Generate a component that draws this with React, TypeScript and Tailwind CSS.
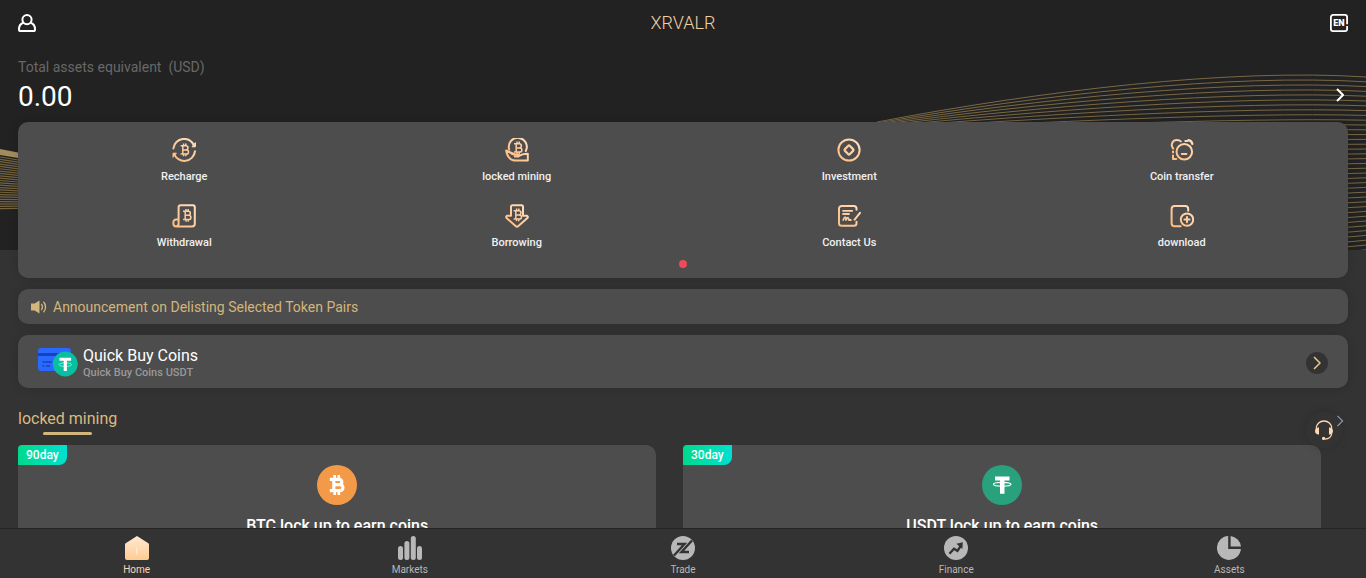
import type { ReactNode } from "react";

type IconItem = {
  label: string;
  icon: ReactNode;
};

type Plan = {
  days: string;
  title: string;
  icon: ReactNode;
};

const waveLines = Array.from({ length: 37 }, (_, i) => i);
const leftLines = Array.from({ length: 23 }, (_, i) => i);

function HeroBackground() {
  return (
    <div className="absolute inset-x-0 top-0 h-[250px] bg-[#222]" aria-hidden="true">
      <svg viewBox="0 0 1366 250" preserveAspectRatio="none" className="h-full w-full" fill="none">
        {waveLines.map((i) => (
          <path
            key={i}
            d={`M877 ${122 + i}C1040 ${91 + 4 * i} 1230 ${68 + 5.5 * i} 1366 ${77 + 4.8 * i}`}
            stroke="#7a6844"
            strokeWidth="1"
          />
        ))}
        <path d="M0 149L18 152.5V158L0 155Z" fill="#a38c5c" />
        {leftLines.map((i) => (
          <path
            key={i}
            d={`M0 ${157 + i * 2.35}L18 ${160 + i * 2.2}`}
            stroke="#75643f"
            strokeWidth="1.2"
          />
        ))}
      </svg>
    </div>
  );
}

function GoldIcon({ children }: { children: ReactNode }) {
  return (
    <svg
      viewBox="0 0 24 24"
      className="h-6 w-6"
      fill="none"
      stroke="url(#gold)"
      strokeWidth="2"
      strokeLinecap="round"
      strokeLinejoin="round"
      aria-hidden="true"
    >
      {children}
    </svg>
  );
}

function CoinMark({ x = 0, y = 0 }: { x?: number; y?: number }) {
  return (
    <path
      transform={`translate(${x} ${y})`}
      strokeWidth="1.5"
      strokeLinecap="butt"
      d="M8 7.8h5.3a2 2 0 0 1 0 4.1h-3 3.5a2.1 2.1 0 0 1 0 4.2H8M10.2 7.8v8.3M11 5.6v2M13.2 5.6v2M11 16.1v2.2M13.2 16.1v2.2"
    />
  );
}

const actions: IconItem[] = [
  {
    label: "Recharge",
    icon: (
      <GoldIcon>
        <path d="M1.4 10.4A10.8 10.8 0 0 1 22.200 7.800M23 13.200A10.800 10.800 0 0 1 2.200 16" />
        <path d="M23.400 5v3.800h-3zM1 19v-3.800h3z" fill="url(#gold)" strokeWidth="1" />
        <CoinMark x={0.6} />
      </GoldIcon>
    ),
  },
  {
    label: "locked mining",
    icon: (
      <GoldIcon>
        <path d="M4.200 11.500a9 9 0 1 1 16.600 1.500" />
        <CoinMark y={-2} x={1} />
        <path d="M1.200 12.500c2.200-.2 4.200 3.200 7.400 3.900l4.600.4c1.200.2 1.200 1.600.2 1.600h-3.600M13.600 18l4-1.600c1.600-.6 3.400-.6 5.200-.6v6.700H11.200C6.200 22.500 2.200 19 1.200 12.500z" />
      </GoldIcon>
    ),
  },
  {
    label: "Investment",
    icon: (
      <GoldIcon>
        <circle cx="12" cy="12" r="10.6" />
        <rect x="8.5" y="8.5" width="7" height="7" rx="1.3" transform="rotate(45 12 12)" strokeWidth="2.3" />
      </GoldIcon>
    ),
  },
  {
    label: "Coin transfer",
    icon: (
      <GoldIcon>
        <circle cx="14.3" cy="13.8" r="7.8" />
        <path d="M11.8 16h4.600M3.200 10.600C.3 7.200 2.200 2 6.800 2c1.600 0 3 .4 4 1.400M3 13.600v.8M3 17.400v3.600h3.200" />
        <path d="M15.400 3h2M18.400 2.200c2.200.4 3.600 1.600 4 3.800" strokeWidth="2.2" />
      </GoldIcon>
    ),
  },
  {
    label: "Withdrawal",
    icon: (
      <GoldIcon>
        <path d="M6.600 18.800V3.300a2 2 0 0 1 2-2h12.200a2 2 0 0 1 2 2v16.500a2.800 2.800 0 0 1-2.800 2.800H4.200a2.800 2.800 0 0 1-2.800-2.800v-1.600a2.800 2.800 0 0 1 2.800-2.800h2.400v4.200a2.800 2.800 0 0 1-2.800 2.800" />
        <CoinMark x={3} y={-0.6} />
      </GoldIcon>
    ),
  },
  {
    label: "Borrowing",
    icon: (
      <GoldIcon>
        <path d="M7.500 1.300h9a1.500 1.500 0 0 1 1.500 1.500v9h3.400c1.400 0 1.900 1.400 1 2.200l-9 8.100a2.100 2.100 0 0 1-2.800 0L1.600 14c-.9-.8-.4-2.200 1-2.200H6v-9a1.500 1.500 0 0 1 1.500-1.500z" />
        <CoinMark x={0.6} y={-1} />
      </GoldIcon>
    ),
  },
  {
    label: "Contact Us",
    icon: (
      <GoldIcon>
        <path d="M19.500 5.800V4.600a2.600 2.600 0 0 0-2.600-2.600H4.600A2.600 2.600 0 0 0 2 4.600v14.600a2.600 2.600 0 0 0 2.600 2.600h12.300a2.600 2.600 0 0 0 2.600-2.600v-1.400M23 8.800l-5.400 6.800" />
        <path d="M6 6.800h9.200M6 10h6M6.200 16c1.800-4 2.600-3.400 2.800 0 1.600-3.600 2.400-2.800 3 0h1.800" strokeWidth="1.8" />
      </GoldIcon>
    ),
  },
  {
    label: "download",
    icon: (
      <GoldIcon>
        <path d="M18.200 6.800V5a3 3 0 0 0-3-3H4.600a3 3 0 0 0-3 3v14.200a3 3 0 0 0 3 3h6" />
        <circle cx="17" cy="15.6" r="6.2" />
        <path d="M17 13v5.200M14.400 15.600h5.200" />
      </GoldIcon>
    ),
  },
];

const navItems: IconItem[] = [
  {
    label: "Home",
    icon: (
      <svg viewBox="0 0 24 24" className="h-6 w-6" aria-hidden="true">
        <path d="M12 0l11.300 7.200q.7.500.7 1.300V22a2 2 0 0 1-2 2H2a2 2 0 0 1-2-2V8.500q0-.8.7-1.300z" fill="url(#home)" />
        <path d="M11.600 11.500v7" stroke="#ffebd3" strokeWidth="1.5" />
      </svg>
    ),
  },
  {
    label: "Markets",
    icon: (
      <svg viewBox="0 0 24 24" className="h-6 w-6" fill="currentColor" aria-hidden="true">
        <rect x="0" y="10" width="5" height="14" rx="2.5" />
        <rect x="6.4" y="5" width="5" height="19" rx="2.5" />
        <rect x="12.8" y="0" width="5" height="24" rx="2.5" />
        <rect x="19" y="10" width="5" height="14" rx="2.5" />
      </svg>
    ),
  },
  {
    label: "Trade",
    icon: (
      <svg viewBox="0 0 24 24" className="h-6 w-6" aria-hidden="true">
        <circle cx="12" cy="12" r="12" fill="currentColor" />
        <path d="M6 8h7.500L3 19.500M18 16h-7.500L21 4.500" fill="none" stroke="#333" strokeWidth="2.4" />
      </svg>
    ),
  },
  {
    label: "Finance",
    icon: (
      <svg viewBox="0 0 24 24" className="h-6 w-6" aria-hidden="true">
        <circle cx="12" cy="12" r="12" fill="currentColor" />
        <path d="M5.400 17.800l4.600-5 3.400 2 3.400-5" fill="none" stroke="#333" strokeWidth="2.4" />
        <path d="M12.400 7.800l6.400-1.600-.4 6.800z" fill="#333" />
      </svg>
    ),
  },
  {
    label: "Assets",
    icon: (
      <svg viewBox="0 0 24 24" className="h-6 w-6" fill="currentColor" aria-hidden="true">
        <path d="M11.200 0A12 12 0 1 0 23.900 13H11.200z" />
        <path d="M13.600 0v10.600H24A12 12 0 0 0 13.600 0z" />
      </svg>
    ),
  },
];

const plans: Plan[] = [
  {
    days: "90day",
    title: "BTC lock up to earn coins",
    icon: (
      <svg viewBox="0 0 40 40" className="h-10 w-10" aria-hidden="true">
        <circle cx="20" cy="20" r="20" fill="#f39a48" />
        <path
          d="M12.800 14.300h9.400a2.600 2.600 0 0 1 0 5.300h-4.500 5.200a3 3 0 0 1 0 6.100H12.800M16.800 14.300v11.400"
          fill="none"
          stroke="#fff"
          strokeWidth="3.2"
        />
        <path d="M17.700 10v4M21.800 10v4M17.700 26v4M21.800 26v4" stroke="#fff" strokeWidth="2.6" />
      </svg>
    ),
  },
  {
    days: "30day",
    title: "USDT lock up to earn coins",
    icon: (
      <svg viewBox="0 0 40 40" className="h-10 w-10" aria-hidden="true">
        <circle cx="20" cy="20" r="20" fill="#28a17c" />
        <path d="M13 11.500h14.500v4H22.500v13.200h-4.500V15.500h-5z" fill="#fff" />
        <ellipse cx="20.200" cy="19.300" rx="8.800" ry="1.900" fill="none" stroke="#fff" strokeWidth="1.2" />
      </svg>
    ),
  },
];

function Chevron({ className }: { className: string }) {
  return (
    <svg viewBox="0 0 8 14" className={className} fill="none" stroke="currentColor" aria-hidden="true">
      <path d="M1 1l6 6-6 6" />
    </svg>
  );
}

function GradientDefs() {
  return (
    <svg className="absolute h-0 w-0" aria-hidden="true">
      <defs>
        <linearGradient id="gold" gradientUnits="userSpaceOnUse" x1="0" y1="24" x2="24" y2="0">
          <stop offset="0" stopColor="#fdb878" />
          <stop offset="1" stopColor="#ffe2c8" />
        </linearGradient>
        <linearGradient id="home" x1="0" y1="0" x2="0" y2="1">
          <stop offset="0" stopColor="#ffe9d2" />
          <stop offset="1" stopColor="#ffcb92" />
        </linearGradient>
      </defs>
    </svg>
  );
}

export default function App() {
  return (
    <div className="relative min-h-screen overflow-hidden bg-[#333] font-[Roboto,sans-serif] text-white">
      <GradientDefs />
      <HeroBackground />

      <div className="relative px-[18px]">
        <header className="flex h-[46px] items-center justify-between">
          <button type="button" aria-label="Account">
            <svg viewBox="0 0 18 18" className="h-[18px] w-[18px]" fill="none" stroke="#fff" strokeWidth="2" aria-hidden="true">
              <circle cx="9" cy="5.6" r="4.6" />
              <path d="M5.600 8.800C2.600 9.600 1 12 1 15.400c0 1 .6 1.600 1.600 1.600h12.800c1 0 1.600-.6 1.600-1.600 0-3.400-1.600-5.800-4.600-6.600" />
            </svg>
          </button>
          <h1 className="text-lg font-light text-[#f3cfa3]">XRVALR</h1>
          <button type="button" aria-label="Language">
            <svg viewBox="0 0 18 18" className="h-[18px] w-[18px]" aria-hidden="true">
              <path
                d="M17.100 10.200V3a2.100 2.100 0 0 0-2.100-2.100H3A2.100 2.100 0 0 0 .9 3v12A2.100 2.100 0 0 0 3 17.100h12a2.100 2.100 0 0 0 2.100-2.100v-3"
                fill="none"
                stroke="#fff"
                strokeWidth="1.8"
              />
              <text x="9" y="12" textAnchor="middle" className="fill-white text-[9px] font-black">
                EN
              </text>
            </svg>
          </button>
        </header>

        <section className="flex items-center justify-between pt-[11px]">
          <div>
            <p className="text-sm leading-5 whitespace-pre text-[#686868]">
              {"Total assets equivalent  (USD)"}
            </p>
            <p className="text-[28px] leading-10">0.00</p>
          </div>
          <a href="#assets" aria-label="View assets" className="mt-4 mr-1">
            <Chevron className="h-[14px] w-2 stroke-2" />
          </a>
        </section>

        <section className="mt-[5px] rounded-[10px] bg-[#4d4d4d] pt-4 pb-[10px] shadow-[0_0_10px_rgba(0,0,0,0.15)]">
          <div className="grid grid-cols-4 gap-y-[19px]">
            {actions.map((action) => (
              <a key={action.label} href="#action" className="flex flex-col items-center gap-[7px]">
                {action.icon}
                <span className="text-[11px] leading-4 font-medium text-[#f0f0f0]">{action.label}</span>
              </a>
            ))}
          </div>
          <div className="mt-[9px] flex justify-center">
            <span className="h-2 w-2 rounded-full bg-[#ee4a5a]" />
          </div>
        </section>

        <a
          href="#announcement"
          className="mt-[11px] flex h-[35px] items-center gap-[6px] rounded-[10px] bg-[#4d4d4d] px-3 text-[#d3b67b] shadow-[0_0_10px_rgba(0,0,0,0.15)]"
        >
          <svg viewBox="0 0 17 14" className="h-[14px] w-[17px]" aria-hidden="true">
            <path d="M1 3.400h3.600L9.500.4v13.200L4.600 10.600H1z" fill="currentColor" />
            <path d="M11.200 4c1.500 1.700 1.500 4.300 0 6M13.400 1.800c2.900 3 2.900 7.400 0 10.400" fill="none" stroke="currentColor" strokeWidth="1.3" />
          </svg>
          <span className="text-sm leading-5">Announcement on Delisting Selected Token Pairs</span>
        </a>

        <a
          href="#quick-buy"
          className="mt-[11px] flex items-center rounded-[10px] bg-[#4d4d4d] pt-[11px] pr-5 pb-2 pl-5 shadow-[0_0_10px_rgba(0,0,0,0.15)]"
        >
          <svg viewBox="0 0 40 30" className="h-[30px] w-10" aria-hidden="true">
            <rect x="0" y="0" width="33" height="23" rx="3" fill="#2969ff" />
            <path d="M0 5h33v3H0z" fill="#1644b4" />
            <path d="M4.500 14H14M4.500 18h2M8 18h4" stroke="#1644b4" strokeWidth="1.3" />
            <circle cx="27.300" cy="16" r="12.4" fill="#08bfa0" />
            <path d="M21 16.600c0 2.400 12.600 2.400 12.600 0s-12.600-2.400-12.600 0z" fill="none" stroke="#8fe6d8" strokeWidth="1" />
            <path d="M21.500 9.800h11.600v3h-4.200V23h-3.200V12.800h-4.200z" fill="#fff" />
          </svg>
          <div className="ml-[5px] flex-1">
            <p className="text-base leading-5">Quick Buy Coins</p>
            <p className="text-[11px] leading-[14px] font-medium text-[#999]">Quick Buy Coins USDT</p>
          </div>
          <span className="flex h-[22px] w-[22px] items-center justify-center rounded-full bg-[#333] text-[#ecc890]">
            <Chevron className="h-[14px] w-2 stroke-[1.5]" />
          </span>
        </a>

        <section className="mt-[21px]">
          <div className="flex justify-between">
            <h2 className="flex flex-col items-center gap-[3px] text-base leading-5 text-[#d9bb82]">
              locked mining
              <span className="h-[3px] w-1/2 rounded-full bg-[#d3b67b]" />
            </h2>
            <a href="#mining" aria-label="All locked mining" className="mt-[6px] mr-1 text-[#8f9cab]">
              <Chevron className="h-3 w-2 stroke-[1.5]" />
            </a>
          </div>
          <div className="mt-[10px] flex">
            {plans.map((plan) => (
              <article
                key={plan.days}
                className="relative mr-[2%] flex w-[48%] flex-col items-center gap-[11px] rounded-[10px] bg-[#4d4d4d] pt-5 pb-8"
              >
                <span className="absolute top-0 left-0 rounded-tl-[4px] rounded-br-[8px] bg-linear-to-r from-[#00d98b] to-[#00e0d0] px-2 text-xs leading-5 font-medium">
                  {plan.days}
                </span>
                {plan.icon}
                <h3 className="text-base leading-5 font-medium">{plan.title}</h3>
              </article>
            ))}
          </div>
        </section>
      </div>

      <button
        type="button"
        aria-label="Customer service"
        className="fixed right-6 bottom-[130px] flex h-9 w-9 items-center justify-center rounded-full shadow-[0_0_8px_rgba(0,0,0,0.15)]"
      >
        <svg viewBox="0 0 20 20" className="h-5 w-5" fill="none" stroke="#ffd9ae" aria-hidden="true">
          <path d="M2.200 8.500C2.400 3.800 5.800 1 10 1s7.600 2.800 7.800 7.500M17.800 13.500c-.5 3.200-3.400 5.400-7 5.600" strokeWidth="1.3" />
          <path d="M5 7.600v7C2.600 14.800 1 13.400 1 11.100S2.600 7.400 5 7.600zM15 7.600v7c2.400.2 4-1.200 4-3.500s-1.600-3.700-4-3.500z" fill="#ffd9ae" stroke="none" />
          <circle cx="9.600" cy="18.400" r="1.6" fill="#ffd9ae" stroke="none" />
        </svg>
      </button>

      <nav className="fixed inset-x-0 bottom-0 grid h-[50px] grid-cols-5 border-t border-[#262626] bg-[#333] pt-[7px]">
        {navItems.map((item, index) => (
          <a
            key={item.label}
            href="#nav"
            className={`flex flex-col items-center gap-1 ${index === 0 ? "text-[#ffd9ae]" : "text-[#b8b8b8]"}`}
          >
            {item.icon}
            <span className="text-[10px] leading-3">{item.label}</span>
          </a>
        ))}
      </nav>
    </div>
  );
}
